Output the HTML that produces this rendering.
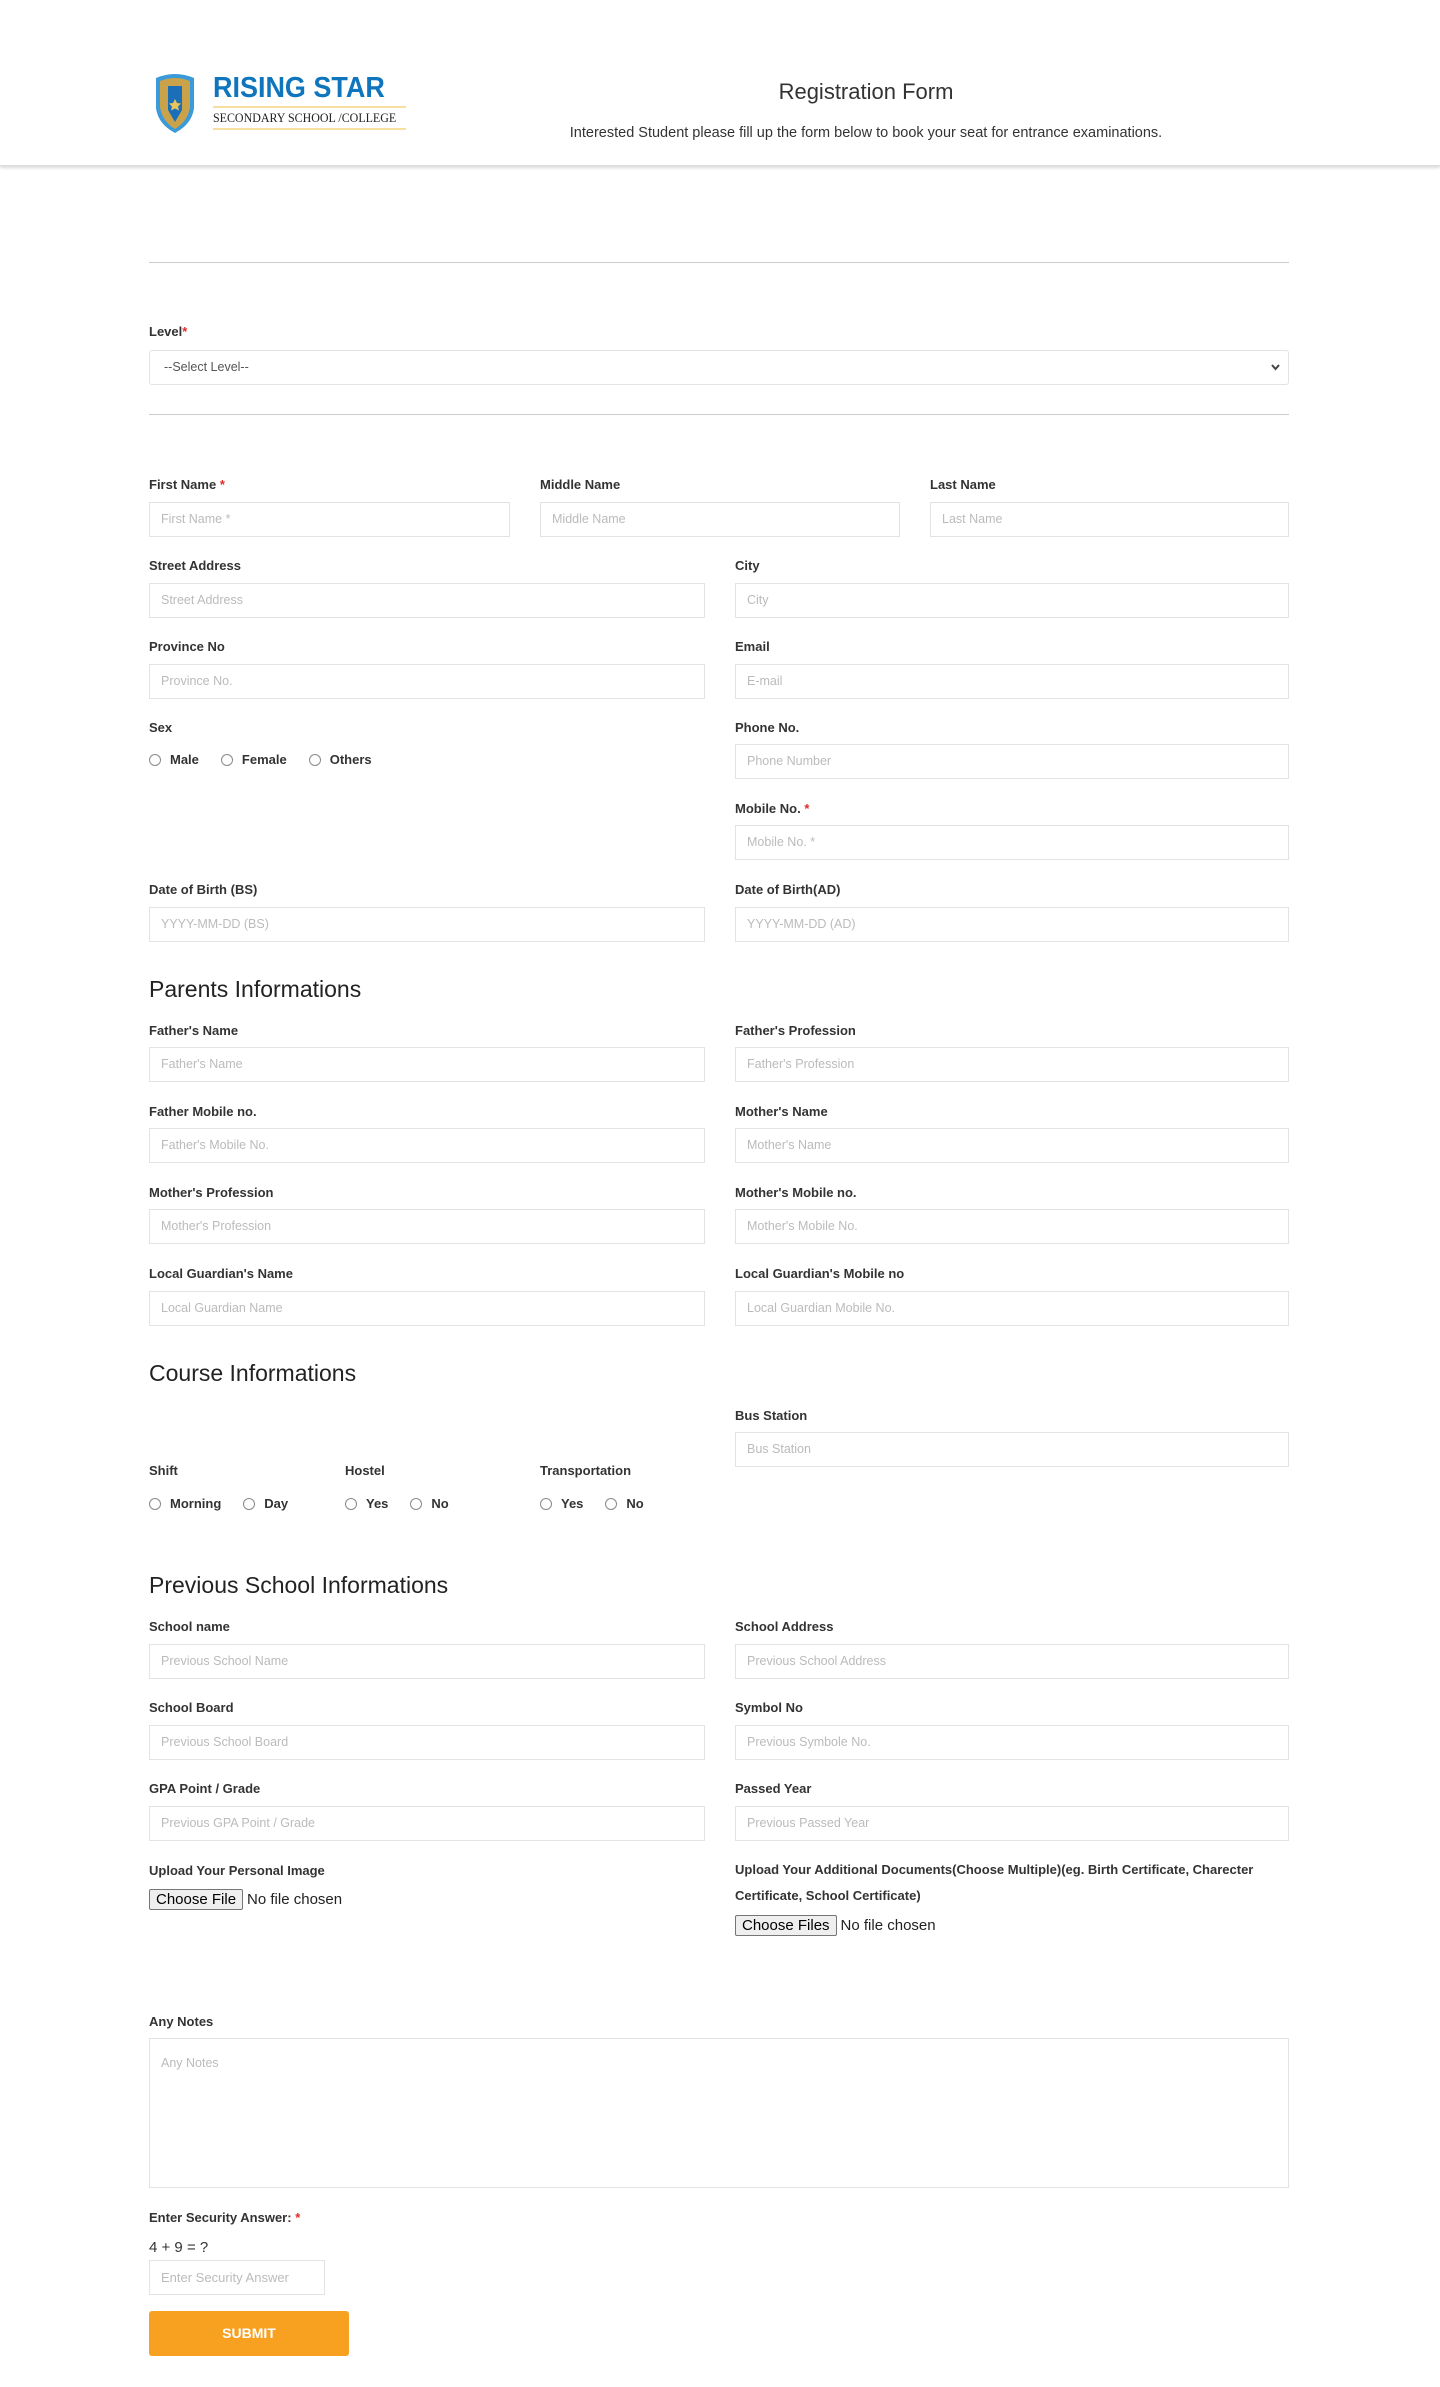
<!DOCTYPE html>
<html><head><meta charset="utf-8">
<style>
*{box-sizing:border-box;margin:0;padding:0}
body{width:1440px;height:2387px;background:#fff;font-family:"Liberation Sans",sans-serif;color:#333;position:relative;overflow:hidden}
.hdr{position:absolute;left:0;top:0;width:1440px;height:166px;background:#fff;box-shadow:0 2px 3px rgba(0,0,0,.15);border-bottom:1px solid #ddd}
.a{position:absolute}
.lbl{position:absolute;font-size:13px;font-weight:bold;color:#333;letter-spacing:0}
.req{color:#e02b2b}
.in{position:absolute;height:35px;border:1px solid #e3e3e3;background:#fff;font-size:12.5px;color:#bbb;padding-left:11px;line-height:33px;white-space:nowrap}
.h2{position:absolute;font-size:23px;color:#222;left:149px}
.hr{position:absolute;left:149px;width:1140px;height:1px;background:#ccc}
.rad{position:absolute;font-size:13px;font-weight:bold;color:#333;display:flex;align-items:center}
.rad i{display:inline-block;width:12px;height:12px;border:1px solid #888;border-radius:50%;margin-right:9px}
.rad span{margin-right:22px;display:flex;align-items:center}
.btnf{display:inline-block;font-size:15px;color:#000;border:1px solid #767676;border-radius:2px;background:#efefef;padding:1px 6px;margin-right:4px}
.ft{position:absolute;font-size:15px;color:#222;display:flex;align-items:center}
</style></head><body>
<div class="hdr">
  <svg class="a" style="left:152px;top:72px" width="46" height="62" viewBox="0 0 46 62">
    <path d="M4 6 Q23 -2 42 6 L42 36 Q40 52 23 61 Q6 52 4 36 Z" fill="#3b9ad9"/>
    <path d="M8 9 Q23 3 38 9 L38 35 Q36 49 23 57 Q10 49 8 35 Z" fill="#c9a24a"/>
    <path d="M16 14 L30 14 L30 38 L23 50 L16 38 Z" fill="#1a6fb8"/>
    <path d="M23 27 l2 4 4 .5 -3 3 1 4 -4 -2 -4 2 1 -4 -3 -3 4 -.5z" fill="#e8c45a"/>
  </svg>
  <div class="a" style="left:213px;top:72px;font-size:29px;font-weight:bold;color:#0f75bc;line-height:32px;transform:scaleX(0.93);transform-origin:left">RISING STAR</div>
  <div class="a" style="left:213px;top:106px;width:193px;height:2px;background:#f7dfa0"></div>
  <div class="a" style="left:213px;top:110px;font-family:'Liberation Serif',serif;font-size:13px;color:#222;line-height:16px;white-space:nowrap;transform:scaleX(0.92);transform-origin:left">SECONDARY SCHOOL /COLLEGE</div>
  <div class="a" style="left:213px;top:128px;width:193px;height:2px;background:#f7dfa0"></div>
  <div class="a" style="left:600px;width:532px;top:79px;text-align:center;font-size:22px;color:#333">Registration Form</div>
  <div class="a" style="left:500px;width:732px;top:125px;text-align:center;font-size:14.5px;color:#333">Interested Student please fill up the form below to book your seat for entrance examinations.</div>
</div>

<div class="hr" style="top:262px"></div>
<div class="lbl" style="left:149px;top:324px">Level<span class="req">*</span></div>
<div class="in" style="left:149px;top:350px;width:1140px;height:35px;border-radius:3px;color:#555;padding-left:14px">--Select Level--<svg class="a" style="right:8px;top:13px" width="9" height="7" viewBox="0 0 9 7"><path d="M1 1 L4.5 5 L8 1" stroke="#444" stroke-width="2" fill="none"/></svg></div>
<div class="hr" style="top:414px"></div>

<div class="lbl" style="left:149px;top:477px">First Name <span class="req">*</span></div>
<div class="in" style="left:149px;top:502px;width:361px">First Name *</div>
<div class="lbl" style="left:540px;top:477px">Middle Name</div>
<div class="in" style="left:540px;top:502px;width:360px">Middle Name</div>
<div class="lbl" style="left:930px;top:477px">Last Name</div>
<div class="in" style="left:930px;top:502px;width:359px">Last Name</div>

<div class="lbl" style="left:149px;top:558px">Street Address</div>
<div class="in" style="left:149px;top:583px;width:556px">Street Address</div>
<div class="lbl" style="left:735px;top:558px">City</div>
<div class="in" style="left:735px;top:583px;width:554px">City</div>

<div class="lbl" style="left:149px;top:639px">Province No</div>
<div class="in" style="left:149px;top:664px;width:556px">Province No.</div>
<div class="lbl" style="left:735px;top:639px">Email</div>
<div class="in" style="left:735px;top:664px;width:554px">E-mail</div>

<div class="lbl" style="left:149px;top:720px">Sex</div>
<div class="rad" style="left:149px;top:752px"><span><i></i>Male</span><span><i></i>Female</span><span><i></i>Others</span></div>
<div class="lbl" style="left:735px;top:720px">Phone No.</div>
<div class="in" style="left:735px;top:744px;width:554px">Phone Number</div>
<div class="lbl" style="left:735px;top:801px">Mobile No. <span class="req">*</span></div>
<div class="in" style="left:735px;top:825px;width:554px">Mobile No. *</div>

<div class="lbl" style="left:149px;top:882px">Date of Birth (BS)</div>
<div class="in" style="left:149px;top:907px;width:556px">YYYY-MM-DD (BS)</div>
<div class="lbl" style="left:735px;top:882px">Date of Birth(AD)</div>
<div class="in" style="left:735px;top:907px;width:554px">YYYY-MM-DD (AD)</div>

<div class="h2" style="top:976px">Parents Informations</div>
<div class="lbl" style="left:149px;top:1023px">Father's Name</div>
<div class="in" style="left:149px;top:1047px;width:556px">Father's Name</div>
<div class="lbl" style="left:735px;top:1023px">Father's Profession</div>
<div class="in" style="left:735px;top:1047px;width:554px">Father's Profession</div>
<div class="lbl" style="left:149px;top:1104px">Father Mobile no.</div>
<div class="in" style="left:149px;top:1128px;width:556px">Father's Mobile No.</div>
<div class="lbl" style="left:735px;top:1104px">Mother's Name</div>
<div class="in" style="left:735px;top:1128px;width:554px">Mother's Name</div>
<div class="lbl" style="left:149px;top:1185px">Mother's Profession</div>
<div class="in" style="left:149px;top:1209px;width:556px">Mother's Profession</div>
<div class="lbl" style="left:735px;top:1185px">Mother's Mobile no.</div>
<div class="in" style="left:735px;top:1209px;width:554px">Mother's Mobile No.</div>
<div class="lbl" style="left:149px;top:1266px">Local Guardian's Name</div>
<div class="in" style="left:149px;top:1291px;width:556px">Local Guardian Name</div>
<div class="lbl" style="left:735px;top:1266px">Local Guardian's Mobile no</div>
<div class="in" style="left:735px;top:1291px;width:554px">Local Guardian Mobile No.</div>

<div class="h2" style="top:1360px">Course Informations</div>
<div class="lbl" style="left:735px;top:1408px">Bus Station</div>
<div class="in" style="left:735px;top:1432px;width:554px">Bus Station</div>
<div class="lbl" style="left:149px;top:1463px">Shift</div>
<div class="rad" style="left:149px;top:1496px"><span><i></i>Morning</span><span><i></i>Day</span></div>
<div class="lbl" style="left:345px;top:1463px">Hostel</div>
<div class="rad" style="left:345px;top:1496px"><span><i></i>Yes</span><span><i></i>No</span></div>
<div class="lbl" style="left:540px;top:1463px">Transportation</div>
<div class="rad" style="left:540px;top:1496px"><span><i></i>Yes</span><span><i></i>No</span></div>

<div class="h2" style="top:1572px">Previous School Informations</div>
<div class="lbl" style="left:149px;top:1619px">School name</div>
<div class="in" style="left:149px;top:1644px;width:556px">Previous School Name</div>
<div class="lbl" style="left:735px;top:1619px">School Address</div>
<div class="in" style="left:735px;top:1644px;width:554px">Previous School Address</div>
<div class="lbl" style="left:149px;top:1700px">School Board</div>
<div class="in" style="left:149px;top:1725px;width:556px">Previous School Board</div>
<div class="lbl" style="left:735px;top:1700px">Symbol No</div>
<div class="in" style="left:735px;top:1725px;width:554px">Previous Symbole No.</div>
<div class="lbl" style="left:149px;top:1781px">GPA Point / Grade</div>
<div class="in" style="left:149px;top:1806px;width:556px">Previous GPA Point / Grade</div>
<div class="lbl" style="left:735px;top:1781px">Passed Year</div>
<div class="in" style="left:735px;top:1806px;width:554px">Previous Passed Year</div>

<div class="lbl" style="left:149px;top:1863px">Upload Your Personal Image</div>
<div class="ft" style="left:149px;top:1889px"><span class="btnf">Choose File</span>No file chosen</div>
<div class="lbl" style="left:735px;top:1863px;width:560px;line-height:26px;margin-top:-6px">Upload Your Additional Documents(Choose Multiple)(eg. Birth Certificate, Charecter Certificate, School Certificate)</div>
<div class="ft" style="left:735px;top:1915px"><span class="btnf">Choose Files</span>No file chosen</div>

<div class="lbl" style="left:149px;top:2014px">Any Notes</div>
<div class="in" style="left:149px;top:2038px;width:1140px;height:150px;line-height:20px;padding-top:14px">Any Notes</div>

<div class="lbl" style="left:149px;top:2210px">Enter Security Answer: <span class="req">*</span></div>
<div class="a" style="left:149px;top:2239px;font-size:15px;color:#333">4 + 9 = ?</div>
<div class="in" style="left:149px;top:2260px;width:176px;font-size:13px">Enter Security Answer</div>
<div class="a" style="left:149px;top:2311px;width:200px;height:45px;background:#f8a01f;border-radius:3px;color:#fff;font-weight:bold;font-size:14px;text-align:center;line-height:45px">SUBMIT</div>
</body></html>
